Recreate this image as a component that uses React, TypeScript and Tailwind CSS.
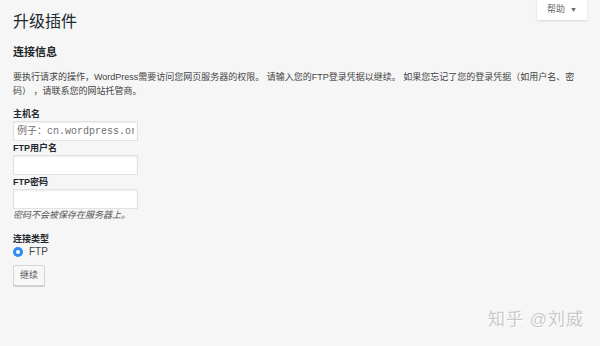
const cjk = "font-['Helvetica_Neue','Liberation_Sans','Noto_Sans_CJK_SC',sans-serif]"

function Field({ label, placeholder }: { label: string; placeholder?: string }) {
  return (
    <div className="flex flex-col">
      <label className="text-[9px] font-bold leading-[14px] text-[#23282d]">{label}</label>
      <input
        type="text"
        placeholder={placeholder}
        className="h-[20px] w-[125px] border border-[#e2e2e2] bg-white px-[3px] font-['Liberation_Mono','Noto_Sans_CJK_SC',monospace] text-[10px] text-[#555] shadow-[inset_0_1px_2px_rgba(0,0,0,0.07)] outline-none placeholder:text-[#6f6f6f]"
      />
    </div>
  )
}

export default function App() {
  return (
    <div className={`relative h-[346px] w-[600px] overflow-hidden bg-[#f6f6f6] ${cjk} text-[#444]`}>
      <button className="absolute right-[13px] top-0 flex h-[20px] w-[50px] items-center justify-center gap-[5px] bg-white text-[9px] text-[#666] shadow-[0_1px_2px_rgba(0,0,0,0.12)]">
        帮助
        <span className="text-[7px]">▼</span>
      </button>

      <div className="px-[13px] pt-[11px]">
        <h1 className="text-[16px] leading-[22px] text-[#23282d]">升级插件</h1>
        <h2 className="mt-[12px] text-[11px] font-bold leading-[14px] text-[#23282d]">连接信息</h2>
        <p className="mt-[11px] w-[570px] text-[9px] leading-[14px] text-[#444]">
          要执行请求的操作，WordPress需要访问您网页服务器的权限。 请输入您的FTP登录凭据以继续。 如果您忘记了您的登录凭据（如用户名、密码） ，请联系您的网站托管商。
        </p>

        <div className="mt-[9px] flex flex-col">
          <Field label="主机名" placeholder="例子：cn.wordpress.org" />
          <Field label="FTP用户名" />
          <Field label="FTP密码" />
        </div>
        <p className="mt-0 text-[9px] italic leading-[12px] text-[#555]">密码不会被保存在服务器上。</p>

        <div className="mt-[12px] text-[9px] font-bold leading-[12px] text-[#23282d]">连接类型</div>
        <label className="mt-[1px] flex h-[12px] items-center gap-[6px] text-[10px] leading-[12px] text-[#444]">
          <span className="flex h-[10px] w-[10px] items-center justify-center rounded-full bg-[#2f8cf6]">
            <span className="h-[4px] w-[4px] rounded-full bg-white" />
          </span>
          FTP
        </label>

        <button className="mt-[7px] h-[21px] w-[32px] rounded-[2px] border border-[#d5d5d5] bg-[#f7f7f7] text-[9px] text-[#555] shadow-[0_1px_0_#ccc]">
          继续
        </button>
      </div>

      <div className="absolute bottom-[14px] right-[16px] text-[17px] tracking-[1px] text-[#c9c9c9] [text-shadow:0_0_1px_#fff,1px_1px_0_#fff]">
        知乎 @刘威
      </div>
    </div>
  )
}
